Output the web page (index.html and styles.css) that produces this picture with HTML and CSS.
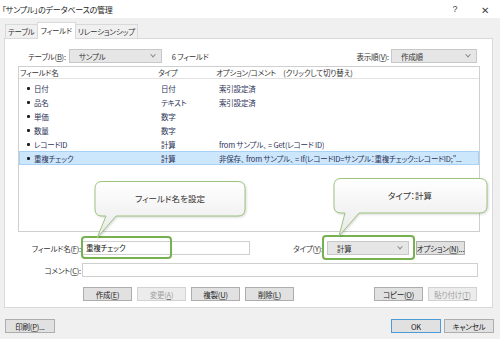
FILE: index.html
```html
<!DOCTYPE html>
<html lang="ja">
<head>
<meta charset="utf-8">
<title>データベースの管理</title>
<link rel="stylesheet" href="styles.css">
</head>
<body>
<div class="window">
  <div class="titlebar">
    <span class="title">「サンプル」のデータベースの管理</span>
    <span class="tb-btns"><span class="tb-help">?</span><span class="tb-close">✕</span></span>
  </div>
  <div class="tabs">
    <div class="tab">テーブル</div>
    <div class="tab active">フィールド</div>
    <div class="tab">リレーションシップ</div>
  </div>
  <div class="panel">
    <div class="toolbar">
      <span class="lbl tbl-lbl">テーブル(<u>B</u>):</span>
      <div class="select sel-table"><span>サンプル</span><span class="chev"></span></div>
      <span class="count">6 フィールド</span>
      <span class="spacer"></span>
      <span class="lbl">表示順(<u>V</u>):</span>
      <div class="select sel-order"><span>作成順</span><span class="chev"></span></div>
    </div>
    <div class="list">
      <div class="list-head">
        <span class="h-name">フィールド名</span>
        <span class="h-type">タイプ</span>
        <span class="h-opt">オプション/コメント　(クリックして切り替え)</span>
      </div>
      <div class="rows">
        <div class="row"><span class="dot"></span><span class="c-name">日付</span><span class="c-type">日付</span><span class="c-opt">索引設定済</span></div>
        <div class="row"><span class="dot"></span><span class="c-name">品名</span><span class="c-type">テキスト</span><span class="c-opt">索引設定済</span></div>
        <div class="row"><span class="dot"></span><span class="c-name">単価</span><span class="c-type">数字</span><span class="c-opt"></span></div>
        <div class="row"><span class="dot"></span><span class="c-name">数量</span><span class="c-type">数字</span><span class="c-opt"></span></div>
        <div class="row"><span class="dot"></span><span class="c-name">レコードID</span><span class="c-type">計算</span><span class="c-opt">from サンプル、 = Get(レコード ID)</span></div>
        <div class="row selected"><span class="dot"></span><span class="c-name">重複チェック</span><span class="c-type">計算</span><span class="c-opt">非保存、 from サンプル、 = If(レコードID=サンプル：重複チェック::レコードID;"...</span></div>
      </div>
    </div>
    <div class="form-row first">
      <span class="flbl">フィールド名(<u>F</u>):</span>
      <div class="input in-name">重複チェック</div>
      <span class="lbl type-lbl">タイプ(<u>Y</u>):</span>
      <div class="select sel-type"><span>計算</span><span class="chev"></span></div>
      <div class="btn btn-opt">オプション(<u>N</u>)...</div>
    </div>
    <div class="form-row">
      <span class="flbl">コメント(<u>C</u>):</span>
      <div class="input in-comment"></div>
    </div>
    <div class="btn-row">
      <div class="btn">作成(<u>E</u>)</div>
      <div class="btn disabled">変更(<u>A</u>)</div>
      <div class="btn">複製(<u>U</u>)</div>
      <div class="btn">削除(<u>L</u>)</div>
      <span class="spacer"></span>
      <div class="btn">コピー(<u>O</u>)</div>
      <div class="btn disabled">貼り付け(<u>T</u>)</div>
    </div>
  </div>
  <div class="footer">
    <div class="btn">印刷(<u>P</u>)...</div>
    <span class="spacer"></span>
    <div class="btn default">OK</div>
    <div class="btn">キャンセル</div>
  </div>

  <div class="frame frame-name"></div>
  <div class="frame frame-type"></div>

  <div class="callout callout-name">
    <svg width="160" height="62" viewBox="0 0 160 62">
      <defs>
        <linearGradient id="cg1" x1="0" y1="0" x2="0" y2="1">
          <stop offset="0" stop-color="#ffffff"/>
          <stop offset="1" stop-color="#e9e9e9"/>
        </linearGradient>
      </defs>
      <path d="M10 1.5 H146 Q153 1.5 153 8.5 V29 Q153 36 146 36 H24 L5 58 L14 36 H10 Q3 36 3 29 V8.5 Q3 1.5 10 1.5 Z" fill="url(#cg1)" stroke="#9cc47e" stroke-width="1"/>
    </svg>
    <span class="callout-text">フィールド名を設定</span>
  </div>

  <div class="callout callout-type">
    <svg width="162" height="62" viewBox="0 0 162 62">
      <defs>
        <linearGradient id="cg2" x1="0" y1="0" x2="0" y2="1">
          <stop offset="0" stop-color="#ffffff"/>
          <stop offset="1" stop-color="#e9e9e9"/>
        </linearGradient>
      </defs>
      <path d="M9 1.5 H148 Q155 1.5 155 8.5 V29 Q155 36 148 36 H27 L7 59 L13 36 H9 Q2 36 2 29 V8.5 Q2 1.5 9 1.5 Z" fill="url(#cg2)" stroke="#9cc47e" stroke-width="1"/>
    </svg>
    <span class="callout-text">タイプ：計算</span>
  </div>
</div>
</body>
</html>
```

FILE: styles.css
```css
* { box-sizing: border-box; }
html, body { margin: 0; padding: 0; }
body {
  width: 500px;
  height: 339px;
  overflow: hidden;
  background: #f0f0f0;
  font-family: "Noto Sans CJK JP", "Noto Sans", sans-serif;
  font-feature-settings: "palt" 1;
  font-size: 7.5px;
  letter-spacing: -0.2px;
  color: #333;
  white-space: nowrap;
}
u { text-decoration: underline; text-underline-offset: 1px; text-decoration-color: #777; }

.window { position: relative; width: 500px; height: 339px; }

.titlebar {
  height: 18px;
  background: #fff;
  display: flex;
  align-items: center;
  padding: 0 0 0 2px;
}
.title { font-size: 8px; color: #222; }
.tb-btns { margin-left: auto; display: flex; align-items: center; }
.tb-help { width: 30px; text-align: center; font-size: 9px; font-family: "Liberation Sans", sans-serif; color: #444; }
.tb-close { width: 30px; text-align: center; font-size: 10px; color: #444; }

.tabs {
  display: flex;
  align-items: flex-end;
  padding-left: 5px;
  margin-top: 4px;
  height: 16px;
}
.tab {
  flex-shrink: 0;
  height: 14px;
  line-height: 13px;
  padding: 0 2px;
  border: 1px solid #d9d9d9;
  border-bottom: none;
  background: #f0f0f0;
  color: #333;
  margin-right: -1px;
}
.tab.active {
  background: #fff;
  position: relative;
  z-index: 1;
  margin-bottom: -1px;
  height: 17px;
  line-height: 15px;
  padding: 0 3px;
}

.panel {
  margin: 0 7px 0 4px;
  height: 270px;
  background: #fff;
  border: 1px solid #d9d9d9;
  padding: 10px 0 0 13px;
}

.toolbar {
  display: flex;
  align-items: center;
  height: 14px;
  width: 459px;
}
.tbl-lbl { margin-left: 10px; margin-right: 3px; }
.select {
  flex-shrink: 0;
  height: 14px;
  background: #e6e6e6;
  border: 1px solid #c8c8c8;
  display: flex;
  align-items: center;
  padding: 0 6px 0 9px;
  color: #333;
}
.select .chev {
  margin-left: auto;
  width: 4px;
  height: 4px;
  border-right: 1px solid #8a8a8a;
  border-bottom: 1px solid #8a8a8a;
  transform: rotate(45deg) translate(-1px, -1px);
}
.sel-table { width: 93px; }
.count { margin-left: 10px; }
.spacer { flex: 1; }
.sel-order { width: 86px; margin-left: 2px; }

.list {
  margin-top: 3px;
  width: 462px;
  height: 166px;
  border: 1px solid #cfcfcf;
}
.list-head {
  display: flex;
  height: 12px;
  line-height: 12px;
  border-bottom: 1px solid #e3e3e3;
  padding-left: 1px;
}
.h-name { width: 138px; flex-shrink: 0; }
.h-type { width: 58px; flex-shrink: 0; }
.rows { padding-top: 2px; }
.row {
  display: flex;
  align-items: center;
  height: 14px;
  color: #2e3358;
  border: 1px solid transparent;
}
.row.selected {
  background: #cce6fb;
  border-color: #a8d2f5;
}
.dot {
  flex-shrink: 0;
  width: 3px;
  height: 3px;
  background: #222;
  margin-left: 7px;
  margin-right: 4px;
  border-radius: 1px;
}
.c-name { width: 127px; flex-shrink: 0; }
.c-type { width: 58px; flex-shrink: 0; }
.c-opt { overflow: hidden; }

.form-row {
  display: flex;
  align-items: center;
  height: 14px;
  margin-top: 8px;
  margin-left: -13px;
}
.form-row.first { margin-top: 9px; }
.flbl {
  flex-shrink: 0;
  width: 77px;
  text-align: right;
  padding-right: 1px;
}
.input {
  flex-shrink: 0;
  height: 14px;
  border: 1px solid #cfcfcf;
  background: #fff;
  padding-left: 3px;
  line-height: 12px;
  color: #111;
}
.in-name { width: 168px; }
.type-lbl { flex-shrink: 0; width: 77px; text-align: right; padding-right: 4px; }
.sel-type { width: 82px; }
.btn-opt { width: 62px; margin-left: 7px; }
.in-comment { width: 396px; }

.btn {
  flex-shrink: 0;
  height: 14px;
  width: 49px;
  background: #e1e1e1;
  border: 1px solid #adadad;
  display: flex;
  align-items: center;
  justify-content: center;
  color: #222;
}
.btn.disabled { color: #a0a0a0; background: #ececec; border-color: #d2d2d2; }
.btn.default { border-color: #4a9bd8; }

.btn-row {
  display: flex;
  gap: 5px;
  margin-top: 10px;
  margin-left: 65px;
  width: 394px;
}

.footer {
  display: flex;
  gap: 3px;
  margin-top: 11px;
  padding: 0 6px 0 5px;
}
.footer .btn { width: 50px; }

.frame {
  position: absolute;
  border: 2px solid #76b04f;
  border-radius: 4px;
}
.frame-name { left: 81px; top: 236px; width: 91px; height: 23px; }
.frame-type { left: 322px; top: 235px; width: 93px; height: 25px; }

.callout { position: absolute; }
.callout svg { display: block; filter: drop-shadow(1px 1px 1px rgba(0,0,0,0.15)); }
.callout-text {
  position: absolute;
  top: 12px;
  left: 0;
  text-align: center;
  font-size: 8.5px;
  letter-spacing: 0;
  color: #333;
}
.callout-name { left: 92px; top: 180px; }
.callout-name .callout-text { width: 156px; }
.callout-type { left: 332px; top: 177px; }
.callout-type .callout-text { width: 156px; }
```
